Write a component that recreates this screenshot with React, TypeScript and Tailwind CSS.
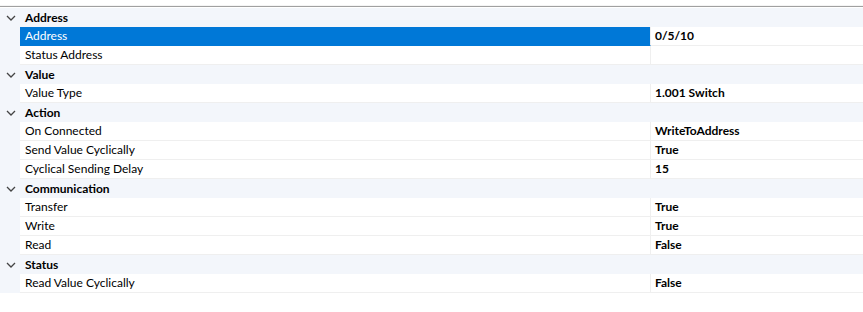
import React from 'react'

type Prop = { name: string; value: string; selected?: boolean }
type Category = { title: string; props: Prop[] }

const CATEGORIES: Category[] = [
  {
    title: 'Address',
    props: [
      { name: 'Address', value: '0/5/10', selected: true },
      { name: 'Status Address', value: '' },
    ],
  },
  { title: 'Value', props: [{ name: 'Value Type', value: '1.001 Switch' }] },
  {
    title: 'Action',
    props: [
      { name: 'On Connected', value: 'WriteToAddress' },
      { name: 'Send Value Cyclically', value: 'True' },
      { name: 'Cyclical Sending Delay', value: '15' },
    ],
  },
  {
    title: 'Communication',
    props: [
      { name: 'Transfer', value: 'True' },
      { name: 'Write', value: 'True' },
      { name: 'Read', value: 'False' },
    ],
  },
  { title: 'Status', props: [{ name: 'Read Value Cyclically', value: 'False' }] },
]

function Chevron() {
  return (
    <svg width="10" height="6" viewBox="0 0 10 6" className="block">
      <polyline points="1,1 5,5 9,1" fill="none" stroke="#444" strokeWidth="1.3" />
    </svg>
  )
}

function PropRow({ p }: { p: Prop }) {
  return (
    <div className="flex h-[19px]">
      <div className="w-[20px] shrink-0 bg-[#f3f6fb]" />
      <div
        className={`w-[631px] shrink-0 pl-[5px] flex items-center border-b border-r border-[#efefef] ${
          p.selected ? 'bg-[#0078d7] text-white border-b-[#0078d7]' : 'bg-white text-black'
        }`}
      >
        {p.name}
      </div>
      <div className="flex-1 pl-[4px] flex items-center bg-white border-b border-[#efefef] font-bold text-black">
        {p.value}
      </div>
    </div>
  )
}

export default function App() {
  return (
    <div className="w-[863px] h-[312px] bg-white text-[12px] leading-[18px]" style={{ fontFamily: 'Lato, "Noto Sans", sans-serif' }}>
      <div className="h-[6px] border-b border-[#f4f4f4]" />
      <div className="border-t border-[#a0a0a0] pt-[1px]">
        {CATEGORIES.map(cat => (
          <div key={cat.title}>
            <div className="flex items-center h-[19px] bg-[#f3f6fb]">
              <div className="w-[20px] shrink-0 flex justify-center pl-[1px]">
                <Chevron />
              </div>
              <div className="pl-[5px] font-bold text-black">{cat.title}</div>
            </div>
            {cat.props.map(p => <PropRow key={p.name} p={p} />)}
          </div>
        ))}
      </div>
    </div>
  )
}
